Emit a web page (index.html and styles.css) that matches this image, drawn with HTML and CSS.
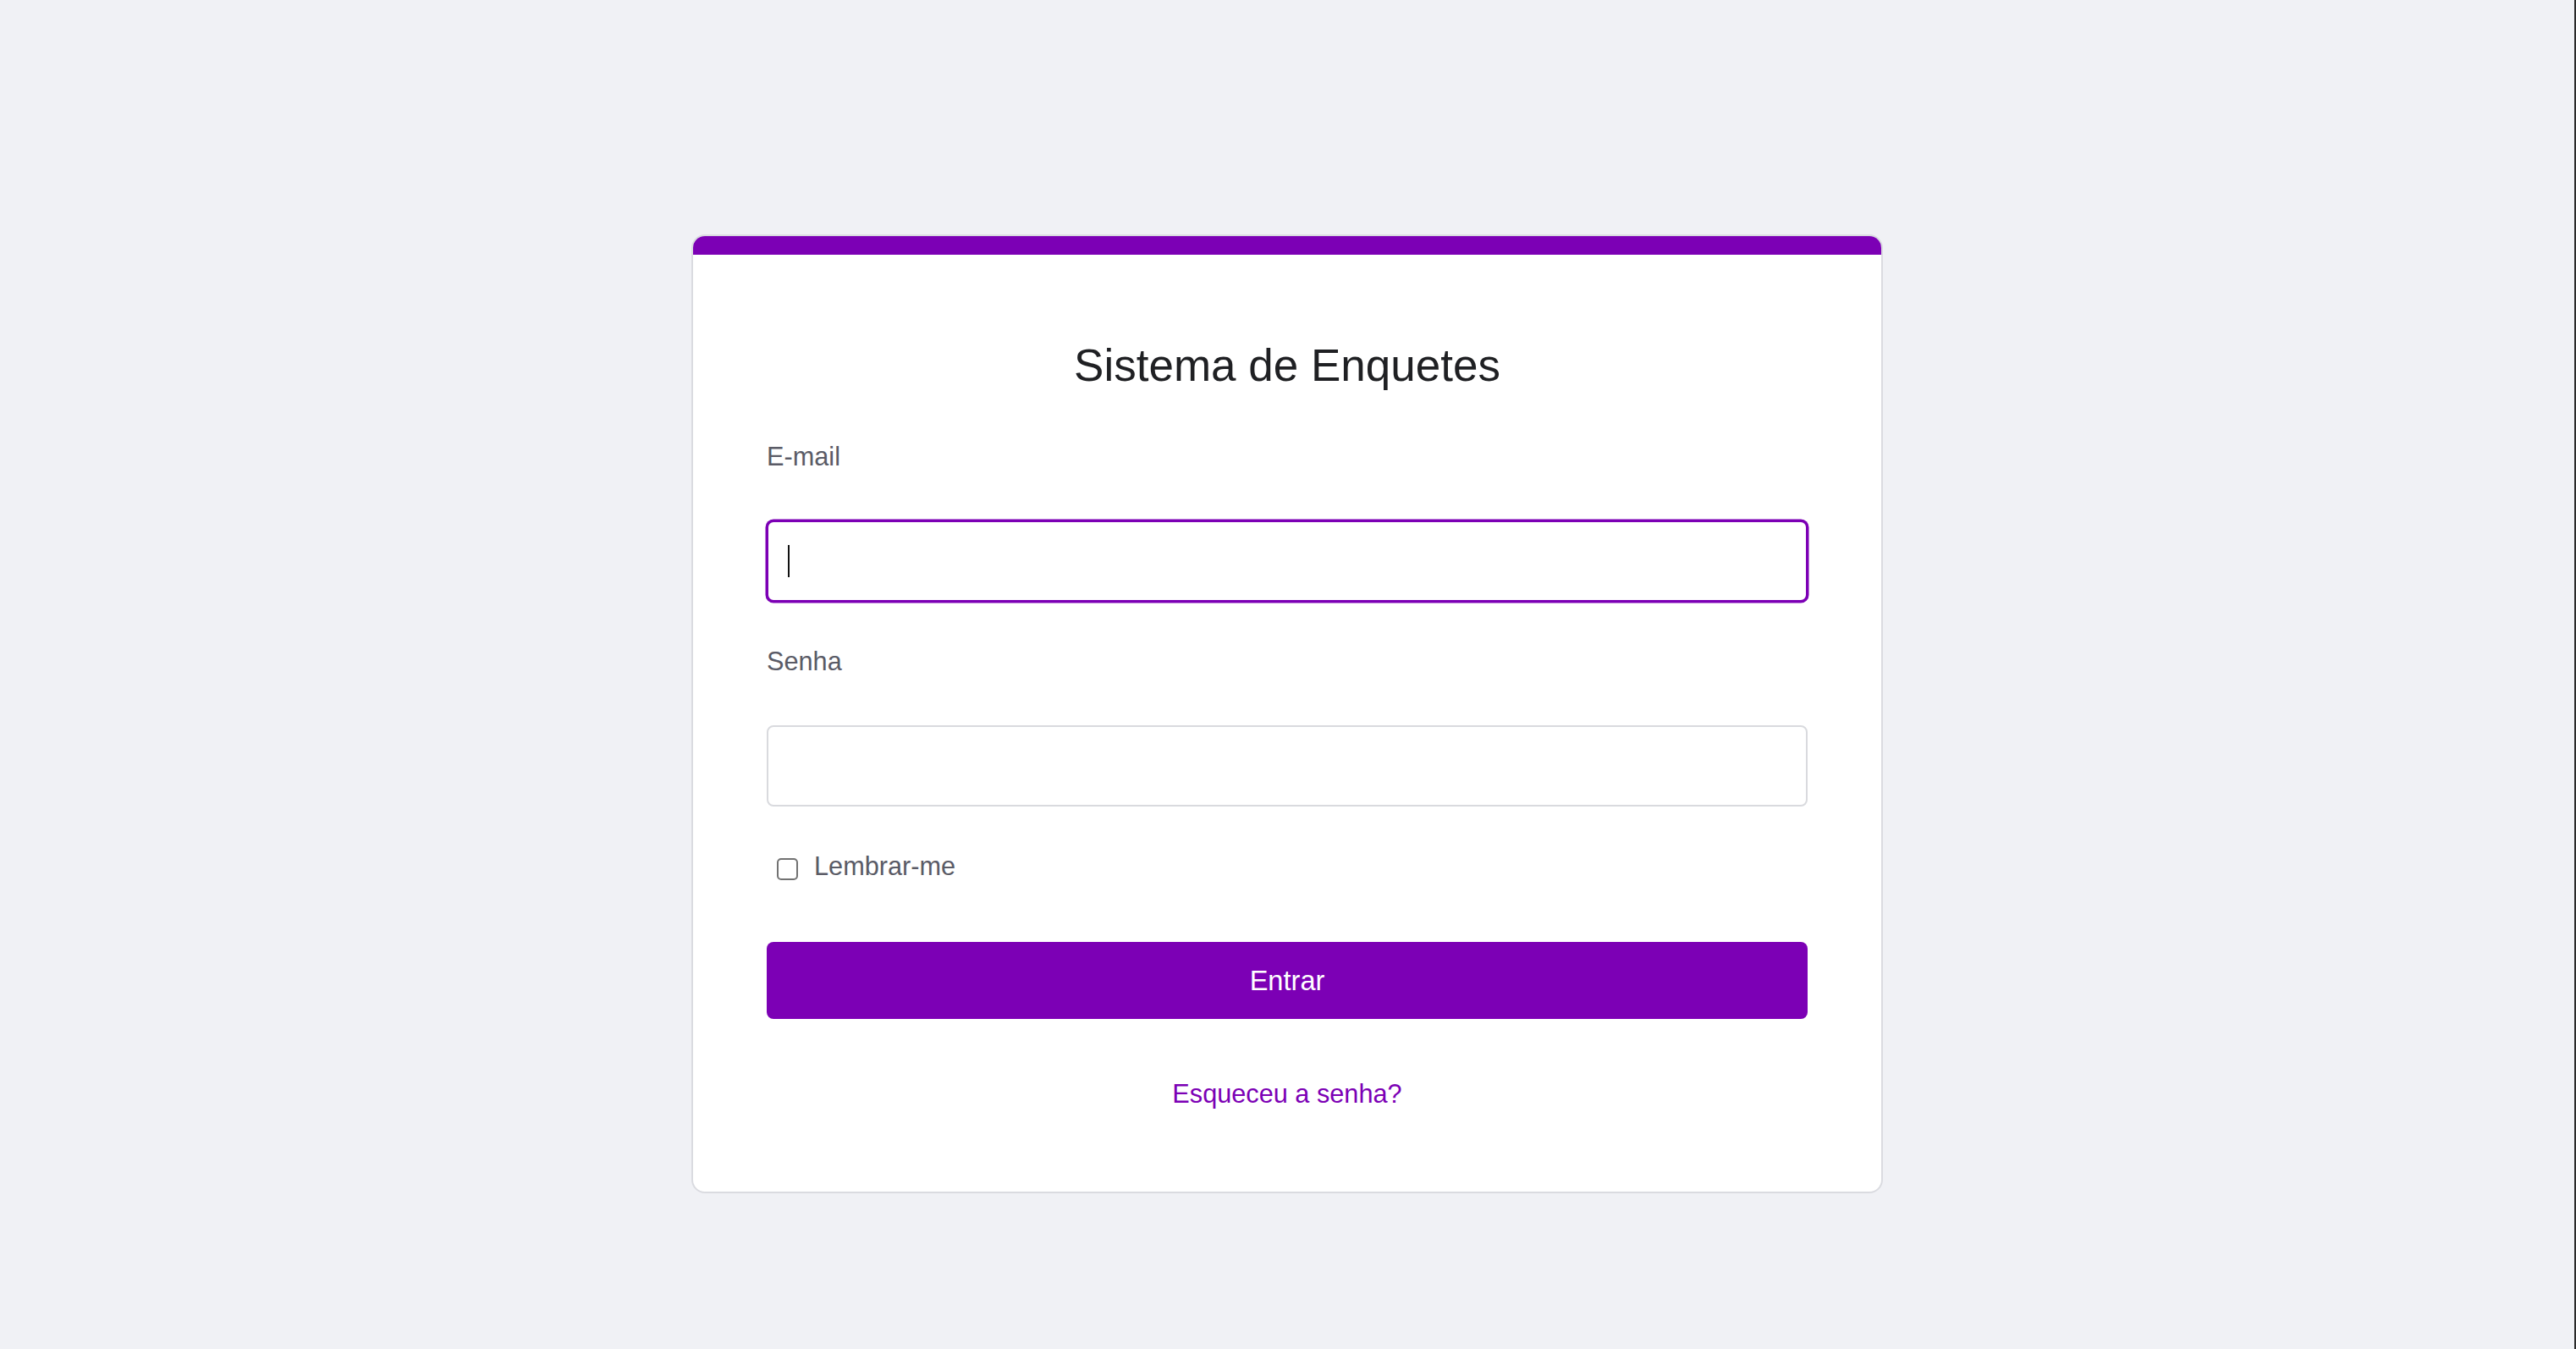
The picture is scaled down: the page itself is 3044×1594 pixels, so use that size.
FILE: index.html
```html
<!DOCTYPE html>
<html lang="pt-BR">
<head>
<meta charset="utf-8">
<title>Sistema de Enquetes - Login</title>
<link rel="stylesheet" href="styles.css">
</head>
<body>
<main class="page">
  <section class="card">
    <div class="card-accent"></div>
    <div class="card-body">
      <h1 class="title">Sistema de Enquetes</h1>
      <form class="form">
        <div class="field">
          <label class="field-label" for="email">E-mail</label>
          <div class="input-wrap">
            <input class="input input-focused" id="email" type="email">
            <span class="caret"></span>
          </div>
        </div>
        <div class="field">
          <label class="field-label" for="senha">Senha</label>
          <div class="input-wrap">
            <input class="input" id="senha" type="password">
          </div>
        </div>
        <label class="remember">
          <input class="checkbox" type="checkbox">
          <span class="remember-text">Lembrar-me</span>
        </label>
        <button class="submit" type="button">Entrar</button>
        <a class="forgot" href="#">Esqueceu a senha?</a>
      </form>
    </div>
  </section>
</main>
</body>
</html>
```

FILE: styles.css
```css
* {
  box-sizing: border-box;
}

html, body {
  margin: 0;
  padding: 0;
}

body {
  background: #f0f1f5;
  font-family: "Liberation Sans", Arial, sans-serif;
  min-height: 100vh;
  border-right: 2px solid #2b2b2b;
}

.page {
  display: flex;
  justify-content: center;
  padding-top: 277px;
}

.card {
  width: 1408px;
  background: #ffffff;
  border: 2px solid #dadbe0;
  border-radius: 16px;
  overflow: hidden;
}

.card-accent {
  height: 22px;
  background: #7c00b5;
}

.card-body {
  padding: 99px 87px 92px 87px;
}

.title {
  margin: 0 0 53px;
  font-size: 53px;
  line-height: 64px;
  font-weight: 400;
  color: #1f2023;
  text-align: center;
}

.form {
  display: flex;
  flex-direction: column;
}

.field {
  display: flex;
  flex-direction: column;
  margin-bottom: 48px;
}

.field-label {
  font-size: 30.7px;
  line-height: 46px;
  color: #5a5b66;
  margin-bottom: 52px;
}

.input-wrap {
  position: relative;
}

.input {
  display: block;
  width: 100%;
  height: 96px;
  border: 2px solid #d9dade;
  border-radius: 8px;
  padding: 0 23px;
  font-family: inherit;
  font-size: 30.7px;
  background: #ffffff;
  outline: none;
  caret-color: transparent;
}

.input-focused {
  border-color: #7c00b5;
  box-shadow: 0 0 0 1.5px #7c00b5;
}

.caret {
  position: absolute;
  left: 25px;
  top: 29px;
  width: 2px;
  height: 38px;
  background: #111111;
}

.remember {
  display: flex;
  align-items: center;
  font-size: 30.7px;
  line-height: 46px;
  color: #5a5b66;
  margin-bottom: 66px;
}

.checkbox {
  appearance: none;
  -webkit-appearance: none;
  width: 25px;
  height: 26px;
  margin: 5px 19px 0 12px;
  border: 2px solid #727272;
  border-radius: 5px;
  background: #ffffff;
}

.submit {
  height: 91px;
  border: none;
  border-radius: 8px;
  background: #7c00b5;
  color: #ffffff;
  font-family: inherit;
  font-size: 32.6px;
  margin-bottom: 66px;
  cursor: pointer;
}

.forgot {
  align-self: center;
  font-size: 30.7px;
  line-height: 46px;
  color: #7c00b5;
  text-decoration: none;
}
```
